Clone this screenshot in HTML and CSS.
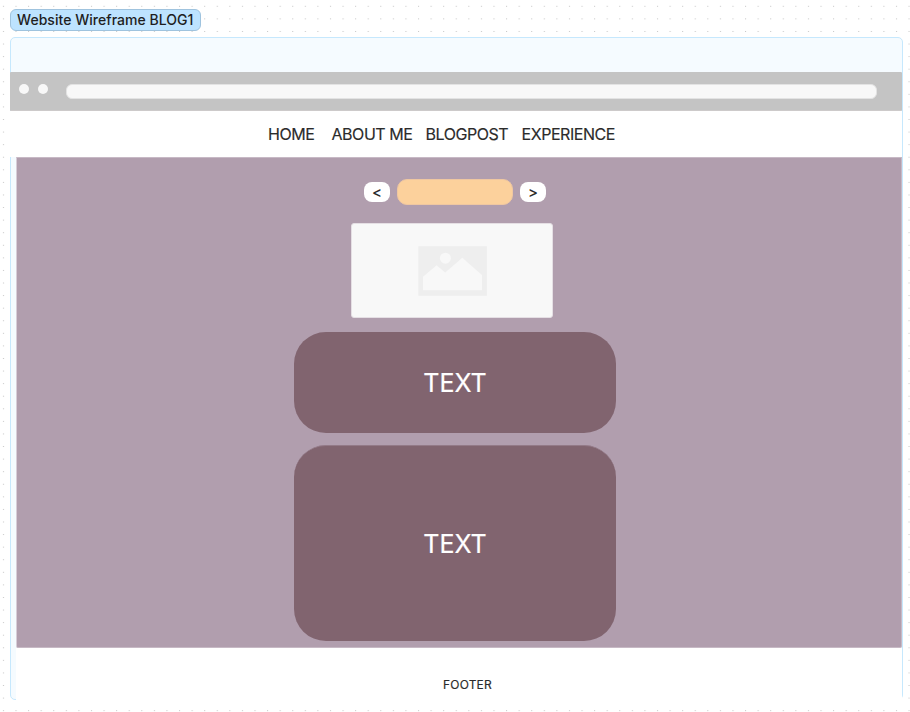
FILE: index.html
```html
<!DOCTYPE html>
<html lang="en">
<head>
<meta charset="utf-8">
<title>Website Wireframe BLOG1</title>
<link rel="stylesheet" href="styles.css">
</head>
<body>
<div class="label">Website Wireframe BLOG1</div>
<main class="frame">
  <div class="browser-bar">
    <span class="dot"></span><span class="dot"></span>
    <div class="address"></div>
  </div>
  <nav class="nav">
    <span class="home">HOME</span><span class="about">ABOUT ME</span><span class="blog">BLOGPOST</span><span>EXPERIENCE</span>
  </nav>
  <section class="content">
    <div class="pager">
      <span class="arrow">&lt;</span>
      <span class="title"></span>
      <span class="arrow">&gt;</span>
    </div>
    <div class="image">
      <svg width="70" height="51" viewBox="0 0 70 51">
        <path fill="#eeeeee" d="M.3.2h68.6v49.6H.3z"/>
        <circle cx="27.4" cy="12.2" r="5.5" fill="#f8f8f8"/>
        <path fill="#f8f8f8" d="M5 44.2V30.8L18.6 19.3 27.2 26.5 44.3 11.7 64 29V44.2z"/>
      </svg>
    </div>
    <div class="block short">TEXT</div>
    <div class="block tall">TEXT</div>
  </section>
  <footer class="footer">FOOTER</footer>
</main>
</body>
</html>
```

FILE: styles.css
```css
* { box-sizing: border-box; }
html { height: 712px; overflow: hidden; }
body {
  margin: 0;
  height: 712px;
  overflow: hidden;
  padding: 9px 7px 0 10px;
  font-family: Inter, sans-serif;
  color: #2b2b2b;
  background-color: #fff;
  background-image: radial-gradient(circle at 3.5px 6.3px, #c4c4c4 0, #cdcdcd 0.5px, transparent 0.9px);
  background-size: 12.59px 12.59px;
}
.label {
  width: 191px;
  height: 22px;
  padding-left: 6px;
  border: 1px solid #9fc3de;
  border-radius: 6px;
  background: #bde3ff;
  color: #1e1e1e;
  font-size: 14px;
  font-weight: 500;
  letter-spacing: 0.04px;
  line-height: 20px;
  white-space: nowrap;
}
.frame {
  width: 893px;
  height: 663px;
  margin-top: 6px;
  padding-top: 34px;
  border: 1px solid #c6e8fd;
  border-radius: 5px;
  background: #f5fbff;
}
.browser-bar {
  display: flex;
  width: 892px;
  height: 39px;
  margin-left: -1px;
  padding: 12px 0 0 9.4px;
  border-bottom: 1px solid #cdcaca;
  border-radius: 1px;
  background: #c4c4c4;
}
.dot {
  width: 10px;
  height: 10px;
  margin-right: 9px;
  border-radius: 50%;
  background: #f8f8f8;
}
.address {
  width: 811px;
  height: 15px;
  margin-left: 9px;
  border: 1px solid #e3e3e3;
  border-radius: 6px;
  background: #f8f8f8;
}
.nav {
  display: flex;
  width: 892px;
  height: 46px;
  margin-left: -1px;
  padding-left: 258px;
  background: #fff;
  font-size: 16px;
  letter-spacing: -0.45px;
  line-height: 46px;
  -webkit-text-stroke: 0.15px #2b2b2b;
  white-space: nowrap;
}
.home { width: 63.5px; }
.about { width: 94px; }
.blog { width: 96px; }
.content {
  width: 886px;
  height: 491px;
  margin-left: 5px;
  padding-top: 21px;
  border: 1px solid #c7b9c5;
  border-left-color: #d8cdd8;
  border-radius: 0 0 2px 2px;
  background: #b19eae;
}
.pager {
  display: flex;
  align-items: center;
  height: 26px;
  gap: 7px;
  margin-left: 347px;
}
.arrow {
  width: 26px;
  height: 20px;
  border-radius: 8px;
  background: #fff;
  font-size: 15px;
  font-weight: 500;
  line-height: 22px;
  text-align: center;
}
.title {
  width: 116px;
  height: 26px;
  border: 1px solid #efc7a1;
  border-radius: 10px;
  background: #fcd19c;
}
.image {
  width: 202px;
  height: 95px;
  margin: 18px 0 0 334px;
  padding: 22px 0 0 66px;
  border: 1px solid #e5dfe4;
  border-radius: 3px;
  background: #f8f8f8;
}
.image svg { display: block; }
.block {
  display: flex;
  align-items: center;
  justify-content: center;
  width: 322px;
  margin-left: 277px;
  border-radius: 32px;
  background: #81646f;
  color: #fff;
  font-size: 25px;
  -webkit-text-stroke: 0.2px #fff;
}
.short { height: 101px; margin-top: 14px; }
.tall {
  height: 196px;
  margin-top: 12px;
  padding-top: 1px;
  border-top: 1px solid #937a87;
}
.footer {
  width: 886px;
  height: 62px;
  margin-left: 5px;
  padding-left: 427px;
  background: #fff;
  font-size: 12px;
  letter-spacing: 0.2px;
  line-height: 74px;
  -webkit-text-stroke: 0.15px #2b2b2b;
}
```
